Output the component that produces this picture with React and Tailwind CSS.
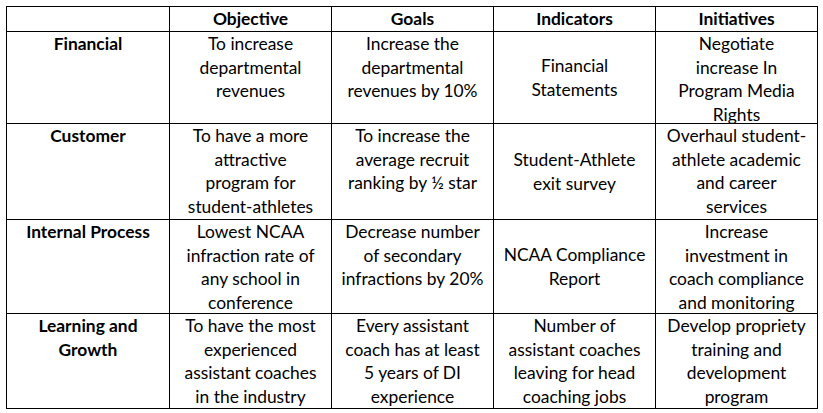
import { Fragment } from "react";

const rows = [
  {
    label: ["Financial"],
    h: "h-[92px]",
    cells: [
      ["To increase", "departmental", "revenues"],
      ["Increase the", "departmental", "revenues by 10%"],
      ["Financial", "Statements"],
      ["Negotiate", "increase In", "Program Media", "Rights"],
    ],
  },
  {
    label: ["Customer"],
    h: "h-[96px]",
    cells: [
      ["To have a more", "attractive", "program for", "student-athletes"],
      ["To increase the", "average recruit", "ranking by ½ star"],
      ["Student-Athlete", "exit survey"],
      ["Overhaul student-", "athlete academic", "and career", "services"],
    ],
  },
  {
    label: ["Internal Process"],
    h: "h-[94px]",
    cells: [
      ["Lowest NCAA", "infraction rate of", "any school in", "conference"],
      ["Decrease number", "of secondary", "infractions by 20%"],
      ["NCAA Compliance", "Report"],
      ["Increase", "investment in", "coach compliance", "and monitoring"],
    ],
  },
  {
    label: ["Learning and", "Growth"],
    h: "h-[95px]",
    cells: [
      ["To have the most", "experienced", "assistant coaches", "in the industry"],
      ["Every assistant", "coach has at least", "5 years of DI", "experience"],
      ["Number of", "assistant coaches", "leaving for head", "coaching jobs"],
      ["Develop propriety", "training and", "development", "program"],
    ],
  },
];

const headers = ["Objective", "Goals", "Indicators", "Initiatives"];

const Lines = ({ lines }) =>
  lines.map((l, i) => (
    <div key={i} className="whitespace-nowrap">
      {l}
    </div>
  ));

export default function App() {
  return (
    <div className="w-[823px] h-[413px] bg-white pl-[6px] pt-[6px] font-['Lato','Open_Sans',sans-serif] text-[17.4px] leading-[23.5px] text-black">
      <div className="grid grid-cols-[163px_162px_162px_162px_162px] w-[812px] border-l border-t border-black">
        {/* header row */}
        <div className="h-[25px] border-r border-b border-black" />
        {headers.map((h) => (
          <div
            key={h}
            className="h-[25px] border-r border-b border-black flex items-center justify-center font-bold"
          >
            {h}
          </div>
        ))}

        {rows.map((r) => (
          <Fragment key={r.label[0]}>
            <div className={`${r.h} border-r border-b border-black text-center font-bold`}>
              <Lines lines={r.label} />
            </div>
            {r.cells.map((c, i) => (
              <div
                key={i}
                className={`${r.h} border-r border-b border-black text-center flex flex-col ${
                  i === 2 ? "justify-center" : "justify-start"
                }`}
              >
                <Lines lines={c} />
              </div>
            ))}
          </Fragment>
        ))}
      </div>
    </div>
  );
}
